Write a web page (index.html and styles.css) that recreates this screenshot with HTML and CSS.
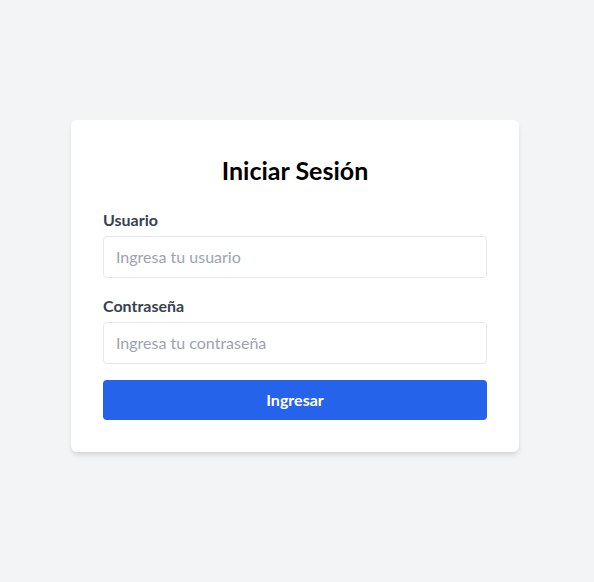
FILE: index.html
```html
<!DOCTYPE html>
<html lang="es">
<head>
<meta charset="utf-8">
<title>Iniciar Sesión</title>
<link rel="stylesheet" href="styles.css">
</head>
<body>
<main class="page">
  <form class="card">
    <h1 class="title">Iniciar Sesión</h1>
    <div class="field">
      <label class="label" for="user">Usuario</label>
      <input class="input" id="user" type="text" placeholder="Ingresa tu usuario">
    </div>
    <div class="field">
      <label class="label" for="pass">Contraseña</label>
      <input class="input" id="pass" type="password" placeholder="Ingresa tu contraseña">
    </div>
    <button class="button" type="button">Ingresar</button>
  </form>
</main>
</body>
</html>
```
FILE: styles.css
```css
* { box-sizing: border-box; }
html, body { margin: 0; padding: 0; }
body {
  background: #f3f4f6;
  font-family: Lato, "Noto Sans", sans-serif;
  color: #000;
}
.page {
  min-height: 100vh;
  display: flex;
  align-items: center;
  justify-content: center;
  padding: 0 4px 10px 0;
}
.card {
  width: 448px;
  background: #fff;
  border-radius: 6px;
  padding: 32px;
  box-shadow: 0 4px 6px -1px rgba(0,0,0,0.1), 0 2px 4px -2px rgba(0,0,0,0.1);
}
.title {
  margin: 0 0 24px;
  font-size: 25px;
  line-height: 32px;
  font-weight: 700;
  text-align: center;
  padding-top: 2px;
  height: 32px;
}
.field { margin-bottom: 16px; }
.label {
  display: block;
  margin-bottom: 4px;
  font-size: 16px;
  line-height: 24px;
  font-weight: 700;
  color: #374151;
}
.input {
  display: block;
  width: 100%;
  padding: 8px 12px;
  font: inherit;
  font-size: 16px;
  line-height: 24px;
  border: 1px solid #e5e7eb;
  border-radius: 4px;
  outline: none;
  color: #111827;
}
.input::placeholder { color: #9ca3af; }
.button {
  display: block;
  width: 100%;
  padding: 8px 16px;
  font: inherit;
  font-size: 16px;
  line-height: 24px;
  font-weight: 700;
  color: #fff;
  background: #2563eb;
  border: none;
  border-radius: 4px;
}
```
